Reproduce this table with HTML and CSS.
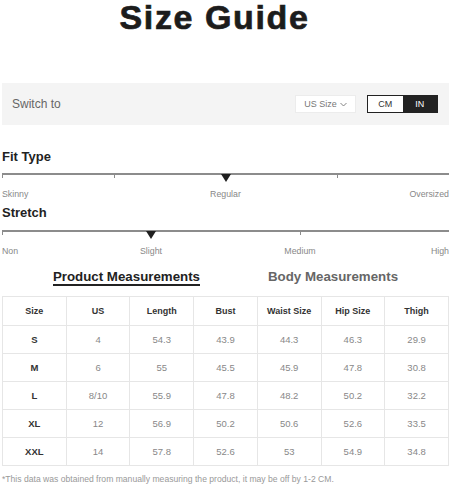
FILE: index.html
```html
<!DOCTYPE html>
<html>
<head>
<meta charset="utf-8">
<link rel="stylesheet" href="styles.css">
</head>
<body>
<div class="page">
  <h1 class="title">Size Guide</h1>

  <div class="switch-bar">
    <span class="switch-label">Switch to</span>
    <div class="switch-controls">
      <div class="dropdown">US Size
        <svg class="chev" width="7" height="5" viewBox="0 0 7 5"><path d="M0.5 1 L3.5 4 L6.5 1" fill="none" stroke="#777" stroke-width="0.9"/></svg>
      </div>
      <div class="unit-toggle">
        <span class="unit">CM</span>
        <span class="unit active">IN</span>
      </div>
    </div>
  </div>

  <section class="scale fit">
    <h2 class="scale-title">Fit Type</h2>
    <div class="track track-fit">
      <span class="seg"></span><span class="seg"></span><span class="seg"></span>
      <span class="pointer pointer-fit"></span>
    </div>
    <div class="labels labels-fit">
      <span class="lab l-start">Skinny</span>
      <span class="lab l-mid">Regular</span>
      <span class="lab l-end">Oversized</span>
    </div>
  </section>

  <section class="scale stretch">
    <h2 class="scale-title">Stretch</h2>
    <div class="track track-stretch">
      <span class="seg"></span><span class="seg"></span>
      <span class="pointer pointer-stretch"></span>
    </div>
    <div class="labels labels-stretch">
      <span class="lab s1">Non</span>
      <span class="lab s2">Slight</span>
      <span class="lab s3">Medium</span>
      <span class="lab s4">High</span>
    </div>
  </section>

  <div class="tabs">
    <span class="tab active">Product Measurements</span>
    <span class="tab">Body Measurements</span>
  </div>

  <table class="size-table">
    <thead>
      <tr><th>Size</th><th>US</th><th>Length</th><th>Bust</th><th>Waist Size</th><th>Hip Size</th><th>Thigh</th></tr>
    </thead>
    <tbody>
      <tr><td class="sz">S</td><td>4</td><td>54.3</td><td>43.9</td><td>44.3</td><td>46.3</td><td>29.9</td></tr>
      <tr><td class="sz">M</td><td>6</td><td>55</td><td>45.5</td><td>45.9</td><td>47.8</td><td>30.8</td></tr>
      <tr><td class="sz">L</td><td>8/10</td><td>55.9</td><td>47.8</td><td>48.2</td><td>50.2</td><td>32.2</td></tr>
      <tr><td class="sz">XL</td><td>12</td><td>56.9</td><td>50.2</td><td>50.6</td><td>52.6</td><td>33.5</td></tr>
      <tr><td class="sz">XXL</td><td>14</td><td>57.8</td><td>52.6</td><td>53</td><td>54.9</td><td>34.8</td></tr>
    </tbody>
  </table>

  <p class="note">*This data was obtained from manually measuring the product, it may be off by 1-2 CM.</p>
</div>
</body>
</html>
```

FILE: styles.css
```css
* { box-sizing: border-box; }
html, body { margin: 0; padding: 0; background: #fff; }
body { font-family: "Liberation Sans", Arial, sans-serif; color: #222; }

.page { width: 451px; padding: 0 2px; }

.title {
  margin: 0;
  padding-right: 22px;
  text-align: center;
  font-size: 34px;
  line-height: 34px;
  font-weight: 700;
  letter-spacing: 1.6px;
  color: #1c1c1c;
  -webkit-text-stroke: 0.7px #1c1c1c;
}

.switch-bar {
  margin-top: 49px;
  height: 42px;
  background: #f4f4f4;
  display: flex;
  align-items: center;
  justify-content: space-between;
  padding: 0 11px 0 10px;
}
.switch-label { font-size: 12px; color: #666; }
.switch-controls { display: flex; align-items: center; gap: 11px; }
.dropdown {
  width: 61px;
  height: 18px;
  background: #fff;
  border: 1px solid #ececec;
  display: flex;
  align-items: center;
  justify-content: center;
  gap: 3px;
  font-size: 9px;
  color: #777;
}
.chev { margin-top: 1px; }
.unit-toggle {
  display: flex;
  width: 71px;
  height: 18px;
  border: 1px solid #222;
}
.unit {
  flex: 1;
  display: flex;
  align-items: center;
  justify-content: center;
  font-size: 9px;
  color: #333;
  background: #fff;
}
.unit.active { background: #222; color: #fff; }

.scale-title {
  margin: 0;
  font-size: 13px;
  line-height: 16px;
  font-weight: 700;
  color: #222;
}
.fit { margin-top: 24px; }
.fit .scale-title { margin-bottom: 8px; }
.stretch { margin-top: 5px; }
.stretch .scale-title { margin-bottom: 9px; }

.track {
  position: relative;
  display: grid;
  height: 6px;
  border-top: 2px solid #8c8c8c;
}
.track-fit { grid-template-columns: 1fr 2fr 1fr; }
.track-stretch { grid-template-columns: 2fr 1fr; }
.seg { border-left: 1px solid #8c8c8c; height: 3px; }
.seg:last-of-type { border-right: 1px solid #8c8c8c; }
.pointer {
  position: absolute;
  top: -1px;
  width: 0;
  height: 0;
  margin-left: -5px;
  border-left: 5px solid transparent;
  border-right: 5px solid transparent;
  border-top: 8px solid #1f1f1f;
}
.pointer-fit { left: 50%; }
.pointer-stretch { left: 33.333%; }

.labels {
  display: grid;
  margin-top: 9px;
  font-size: 8.8px;
  line-height: 12px;
  color: #888;
}
.labels-fit { grid-template-columns: repeat(4, 1fr); }
.l-start { grid-column: 1; justify-self: start; }
.l-mid { grid-column: 2 / 4; justify-self: center; }
.l-end { grid-column: 4; justify-self: end; }
.labels-stretch { grid-template-columns: repeat(6, 1fr); }
.s1 { grid-column: 1; justify-self: start; }
.s2 { grid-column: 2 / 4; justify-self: center; }
.s3 { grid-column: 4 / 6; justify-self: center; }
.s4 { grid-column: 6; justify-self: end; }

.tabs {
  display: flex;
  justify-content: center;
  gap: 68px;
  margin-top: 13px;
}
.tab {
  font-size: 13.3px;
  line-height: 14px;
  font-weight: 700;
  color: #666;
  border-bottom: 2px solid transparent;
}
.tab.active { color: #222; border-bottom-color: #222; }

.size-table {
  margin-top: 10px;
  width: 447px;
  border-collapse: collapse;
  table-layout: fixed;
}
.size-table th, .size-table td {
  border: 1px solid #e6e6e6;
  padding: 0;
  text-align: center;
  font-size: 9.5px;
}
.size-table thead tr { height: 29px; }
.size-table tbody tr { height: 28px; }
.size-table th { font-weight: 700; color: #333; font-size: 9px; }
.size-table td { color: #888; }
.size-table td.sz { font-weight: 700; color: #333; }

.note {
  margin: 7px 0 0;
  font-size: 8.6px;
  line-height: 12px;
  color: #999;
}
```
